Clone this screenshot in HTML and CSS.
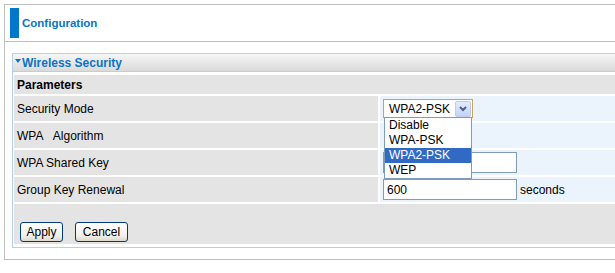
FILE: index.html
```html
<!DOCTYPE html>
<html>
	<head>
		<meta charset="UTF-8">
		<title>Configuration</title>
		<link rel="stylesheet" href="styles.css">
	</head>
	<body>
		<div class="page">
			<div class="page-head">
				<span class="head-bar"></span>
				<span class="head-title">Configuration</span>
			</div>
			<div class="page-body">
				<div class="panel">
					<div class="panel-title"><span class="arrow"></span>Wireless Security</div>
					<div class="form-grid">
						<div class="cell sect">Parameters</div>

						<div class="cell label">Security Mode</div>
						<div class="cell value">
							<div class="select">
								<span class="select-text">WPA2-PSK</span>
								<span class="select-btn">
									<svg width="8" height="6" viewBox="0 0 8 6"><path d="M1 1 L4 4 L7 1" fill="none" stroke="#4d6185" stroke-width="2"/></svg>
								</span>
								<ul class="select-list">
									<li>Disable</li>
									<li>WPA-PSK</li>
									<li class="on">WPA2-PSK</li>
									<li>WEP</li>
								</ul>
							</div>
						</div>

						<div class="cell label">WPA&nbsp;&nbsp; Algorithm</div>
						<div class="cell value"></div>

						<div class="cell label">WPA Shared Key</div>
						<div class="cell value"><input class="text-input" type="text" value=""></div>

						<div class="cell label">Group Key Renewal</div>
						<div class="cell value"><input class="text-input" type="text" value="600"><span class="unit">seconds</span></div>

						<div class="cell actions">
							<input class="btn btn-apply" type="button" value="Apply">
							<input class="btn btn-cancel" type="button" value="Cancel">
						</div>
					</div>
				</div>
			</div>
		</div>
	</body>
</html>
```

FILE: styles.css
```css
body{
	margin:0;
	overflow:hidden;
	background:#fff;
	font-family:"Liberation Sans", Arial, sans-serif;
	font-size:12px;
	color:#000;
}
ul,li{
	margin:0;
	padding:0;
	list-style:none;
}

.page{
	margin:4px 0 0 4px;
	border:1px solid #c0c0c0;
	border-right:none;
}
.page-head{
	height:36px;
	display:flex;
	align-items:center;
	padding-left:5px;
	border-bottom:1px solid #c0c0c0;
}
.page-head .head-bar{
	width:9px;
	height:30px;
	background:#0077c8;
	margin-right:3px;
}
.page-head .head-title{
	font-weight:bold;
	font-size:11.5px;
	color:#0a74c6;
}

.page-body{
	padding:11px 0 11px 7px;
}
.panel{
	border:1px solid #b7d0ea;
	border-right:none;
}
.panel-title{
	height:17px;
	display:flex;
	align-items:center;
	padding-left:2px;
	background:linear-gradient(#f6f6f6, #dadada);
	border-bottom:1px solid #b7d0ea;
	font-weight:bold;
	color:#0a74c6;
}
.panel-title .arrow{
	width:0;
	height:0;
	border-left:3.5px solid transparent;
	border-right:3.5px solid transparent;
	border-top:4px solid #0a74c6;
	margin:0 1px 3px 0;
}

.form-grid{
	display:grid;
	grid-template-columns:364px 1fr;
	grid-template-rows:19px 25px 25px 25px 25px 40px;
	gap:2px;
	padding:3px 0 3px 1px;
}
.form-grid .cell{
	display:flex;
	align-items:center;
	padding-left:3px;
	background:#e4e4e4;
}
.form-grid .sect{
	grid-column:1 / 3;
	font-weight:bold;
}
.form-grid .value{
	background:#ebf4fd;
}
.form-grid .actions{
	grid-column:1 / 3;
	align-items:flex-end;
	padding:0 0 2px 6px;
}

.select{
	position:relative;
	width:88px;
	height:17px;
	display:flex;
	align-items:center;
	justify-content:space-between;
	border:1px solid #c9a55c;
	background:#fff;
}
.select .select-text{
	padding-left:5px;
}
.select .select-btn{
	width:16px;
	height:16px;
	margin-right:1px;
	display:flex;
	align-items:center;
	justify-content:center;
	box-sizing:border-box;
	border:1px solid #bccbef;
	border-radius:2px;
	background:linear-gradient(#e3ebfd, #c3d3fb);
}
.select .select-list{
	position:absolute;
	left:0;
	top:17px;
	width:86px;
	border:1px solid #7f9db9;
	background:#fff;
	z-index:2;
}
.select-list li{
	height:15px;
	line-height:15px;
	padding-left:4px;
}
.select-list li.on{
	background:#316ac5;
	color:#fff;
}

.text-input{
	width:129px;
	height:19px;
	margin:0;
	padding:0 0 0 3px;
	box-sizing:content-box;
	border:1px solid #7f9db9;
	font-family:"Liberation Sans", Arial, sans-serif;
	font-size:12px;
	outline:none;
}
.unit{
	margin-left:3px;
}

.btn{
	height:20px;
	margin:0 12px 0 0;
	padding:0;
	border:1px solid #003c74;
	border-radius:3px;
	background:linear-gradient(#ffffff, #f1f0eb 70%, #dcd8cc);
	font-family:"Liberation Sans", Arial, sans-serif;
	font-size:12px;
	color:#000;
}
.btn-apply{
	width:43px;
}
.btn-cancel{
	width:53px;
}
```
